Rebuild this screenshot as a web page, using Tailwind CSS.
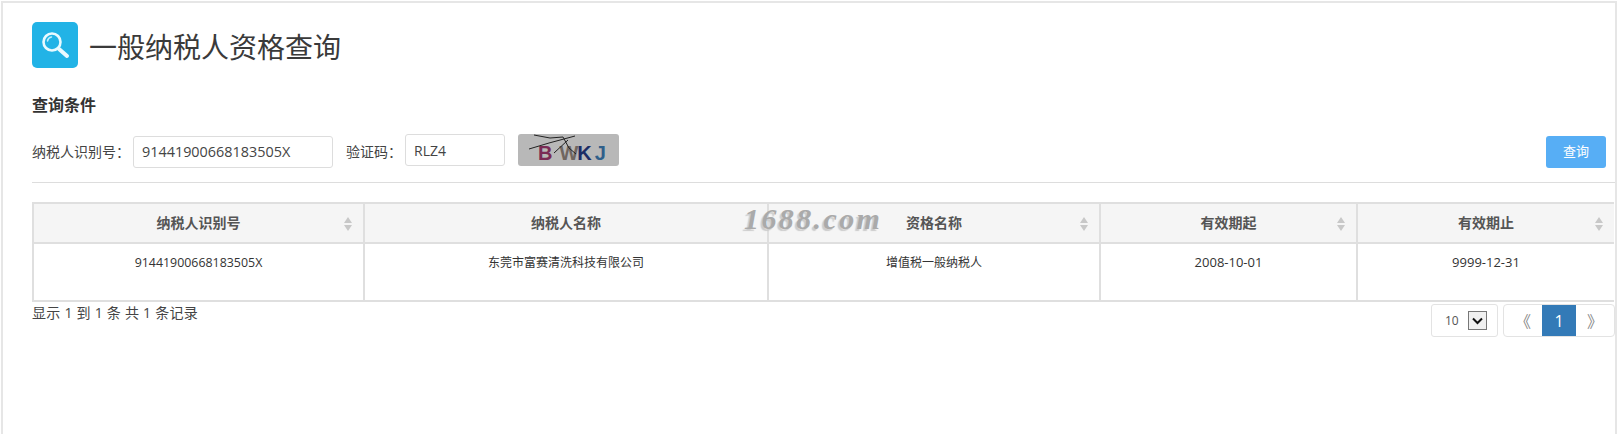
<!doctype html>
<html lang="zh">
<head>
<meta charset="utf-8">
<script src="https://cdn.jsdelivr.net/npm/@tailwindcss/browser@4"></script>
</head>
<body class="bg-white">
<div class="relative h-[434px] w-[1622px] overflow-hidden font-['Open_Sans','Noto_Sans_CJK_SC',sans-serif] text-[#333]">
  <div class="h-[434px] w-[1616px] ml-px mt-px border-l-2 border-t-2 border-r-2 border-[#e6e6e6] pl-[29px]">
    <div class="flex items-center h-[46px] mt-[19px] gap-[11px]">
      <div class="w-[46px] h-[46px] rounded-[5px] bg-[#22b3e6] flex items-center justify-center">
        <svg width="30" height="30" viewBox="0 0 30 30" fill="none">
          <circle cx="12" cy="12" r="8.5" stroke="#eafaff" stroke-width="2.6"/>
          <path d="M7.5 11a5 5 0 0 1 4-4" stroke="#bfeefc" stroke-width="1.5" stroke-linecap="round"/>
          <path d="M19 19l8 7" stroke="#eafaff" stroke-width="4" stroke-linecap="round"/>
        </svg>
      </div>
      <h1 class="text-[28px] leading-[46px] pt-1 text-[#3a3a3a] font-normal">一般纳税人资格查询</h1>
    </div>
    <h2 class="text-base font-bold mt-[25px] leading-[24px] text-[#333]">查询条件</h2>
    <div class="flex items-center h-[33px] mt-[18px] w-[1574px]">
      <span class="text-sm text-[#444] w-[101px]">纳税人识别号：</span>
      <input class="w-[200px] h-[32px] border border-[#ddd] rounded-[3px] px-2 text-[14.4px] text-[#444]" value="91441900668183505X">
      <span class="text-sm text-[#444] ml-[13px] w-[59px]">验证码：</span>
      <input class="w-[100px] h-[32px] border border-[#ddd] rounded-[3px] px-2 text-sm text-[#444] -mt-[3px]" value="RLZ4">
      <div class="relative ml-[13px] w-[101px] h-[32px] rounded-[3px] bg-[#b8b8b8] -mt-[3px]">
        <div class="absolute left-[20px] top-[6px] flex font-['Liberation_Sans',sans-serif] font-bold text-[20px] leading-[26px]">
          <span class="text-[#7a2a55]">B</span><span class="ml-[7px] text-[#6f6660]">W</span><span class="-ml-px text-[#1b2c66]">K</span><span class="ml-[3px] text-[#2f5f8a]">J</span>
        </div>
        <svg class="absolute left-0 top-0" width="101" height="32" fill="none" stroke="#222" stroke-width="1">
          <path d="M16 1l16 3 13-1 6 11 7 6"/>
          <path d="M11 15l20-6 26-7"/>
          <path d="M36 19l14-13"/>
        </svg>
      </div>
      <button class="ml-auto w-[60px] h-[32px] rounded-[3px] bg-[#57aef5] text-white text-[13px]">查询</button>
    </div>
    <div class="h-px bg-[#ddd] mt-[14px] w-[1583px]"></div>

    <div class="mt-[19px] w-[1582px] border-t-2 border-l-2 border-b-2 border-[#dfdfdf] text-[12px]">
      <div class="grid grid-cols-[331px_404px_332px_257px_256px] h-[40px] bg-[#f5f5f5] border-b-2 border-[#dfdfdf] font-bold text-sm text-[#555]">
        <div class="relative flex items-center justify-center border-r-2 border-[#dfdfdf]">纳税人识别号<svg class="absolute right-[11px] top-[13px]" width="8" height="14" fill="#c8c8c8"><path d="M4 0l4 6H0zM4 14l4-6H0z"/></svg></div>
        <div class="flex items-center justify-center border-r-2 border-[#dfdfdf]">纳税人名称</div>
        <div class="relative flex items-center justify-center border-r-2 border-[#dfdfdf]">资格名称<svg class="absolute right-[11px] top-[13px]" width="8" height="14" fill="#c8c8c8"><path d="M4 0l4 6H0zM4 14l4-6H0z"/></svg></div>
        <div class="relative flex items-center justify-center border-r-2 border-[#dfdfdf]">有效期起<svg class="absolute right-[11px] top-[13px]" width="8" height="14" fill="#c8c8c8"><path d="M4 0l4 6H0zM4 14l4-6H0z"/></svg></div>
        <div class="relative flex items-center justify-center">有效期止<svg class="absolute right-[11px] top-[13px]" width="8" height="14" fill="#c8c8c8"><path d="M4 0l4 6H0zM4 14l4-6H0z"/></svg></div>
      </div>
      <div class="grid grid-cols-[331px_404px_332px_257px_256px] h-[56px] text-[#333] text-center leading-[37px]">
        <div class="border-r-2 border-[#dfdfdf] text-[12.4px]">91441900668183505X</div>
        <div class="border-r-2 border-[#dfdfdf]">东莞市富赛清洗科技有限公司</div>
        <div class="border-r-2 border-[#dfdfdf]">增值税一般纳税人</div>
        <div class="border-r-2 border-[#dfdfdf] text-[13px]">2008-10-01</div>
        <div class="text-[13px]">9999-12-31</div>
      </div>
    </div>

    <div class="flex justify-between w-[1583px] mt-px">
      <div class="text-sm tracking-[0.25px] text-[#444] leading-[20px]">显示 1 到 1 条 共 1 条记录</div>
      <div class="flex gap-[5px] mt-px">
        <div class="flex items-center w-[67px] h-[33px] border border-[#e3e3e3] rounded-[3px] pl-[13px] text-[12px] text-[#555]">10
          <span class="ml-[9px] w-[19px] h-[19px] border border-[#777] bg-[#f0f0f0] flex items-center justify-center">
            <svg width="11" height="8" fill="none" stroke="#111" stroke-width="2"><path d="M1 1.5l4.5 4.5 4.5-4.5"/></svg>
          </span>
        </div>
        <div class="flex h-[33px] w-[112px] border border-[#e3e3e3] rounded-[4px] overflow-hidden text-base">
          <span class="w-[38px] flex items-center justify-center text-[#888]">《</span>
          <span class="w-[34px] flex items-center justify-center bg-[#337ab7] text-white">1</span>
          <span class="w-[38px] flex items-center justify-center text-[#888]">》</span>
        </div>
      </div>
    </div>
  </div>
  <div class="absolute left-[744px] top-[201px] font-['Liberation_Serif',serif] italic font-bold text-[30px] leading-[36px] tracking-[2.4px] text-[#aaa] [text-shadow:-2px_2px_1px_#ccc]">1688.com</div>
</div>
</body>
</html>
